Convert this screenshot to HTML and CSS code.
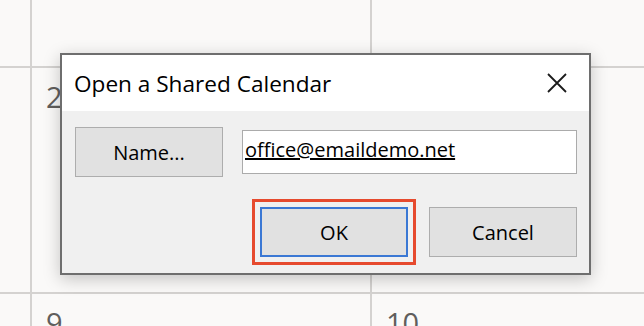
FILE: index.html
```html
<!DOCTYPE html>
<html>
  <head>
    <title>Open a Shared Calendar</title>
    <link rel="stylesheet" href="styles.css">
  </head>
  <body>
    <div id="calendar">
      <div class="cell"></div>
      <div class="cell"></div>
      <div class="cell"></div>
      <div class="cell"></div>
      <div class="cell"><span class="day">2</span></div>
      <div class="cell"><span class="day">3</span></div>
      <div class="cell"></div>
      <div class="cell"><span class="day">9</span></div>
      <div class="cell"><span class="day">10</span></div>
    </div>

    <div id="dialog">
      <div class="titlebar">
        <p class="title">Open a Shared Calendar</p>
        <button class="close" aria-label="Close">
          <svg width="20" height="20" viewBox="0 0 20 20"><path d="M1 1 L19 19 M19 1 L1 19" stroke="#1b1b1b" stroke-width="1.8" fill="none"/></svg>
        </button>
      </div>
      <div class="dlgbody">
        <div class="row">
          <button class="btn">Name...</button>
          <div class="field"><span class="addr">office@emaildemo.net</span></div>
        </div>
        <div class="row actions">
          <button class="btn ok">OK</button>
          <button class="btn">Cancel</button>
        </div>
      </div>
    </div>
  </body>
</html>
```

FILE: styles.css
```css
html, body {width: 100%; height: 100%;}
body { margin: 0; background: #faf9f8; font-family: "Open Sans", "Noto Sans", sans-serif; color: #000; overflow: hidden; }
#calendar { display: grid; grid-template-columns: 30px 338px 1fr; grid-template-rows: 66px 224px 1fr; gap: 2px; background: #d4d2d0; height: 100%; }
.cell { background: #faf9f8; padding: 14px 0 0 14px; }
.day { font-size: 29px; color: #605e5c; line-height: 1; }

#dialog { position: absolute; left: 60px; top: 53px; width: 527px; border: 2px solid #6e6e6e; background: #f0f0f0; box-shadow: 0 4px 16px rgba(0, 0, 0, 0.22); }
.titlebar { display: flex; align-items: center; justify-content: space-between; height: 56px; background: #fff; padding: 0 22px 0 12px; }
.title { margin: 0; font-size: 22.6px; }
.close { border: none; background: none; padding: 0; width: 20px; height: 20px; display: flex; }
.dlgbody { padding: 16px 12px 16px 13px; display: flex; flex-direction: column; gap: 30px; }
.row { display: flex; align-items: center; gap: 19px; }
.actions { justify-content: flex-end; gap: 21px; }
.btn { width: 148px; height: 50px; background: #e1e1e1; border: 1px solid #adadad; font-family: inherit; font-size: 20px; color: #000; padding: 0; }
.ok { border: 2px solid #3b78d4; outline: 3px solid #e64a2e; outline-offset: 5px; }
.field { flex-grow: 1; height: 44px; box-sizing: border-box; background: #fff; border: 1px solid #ababab; padding: 7px 0 0 2px; }
.addr { font-size: 20px; text-decoration: underline; line-height: 1.2; }
```
